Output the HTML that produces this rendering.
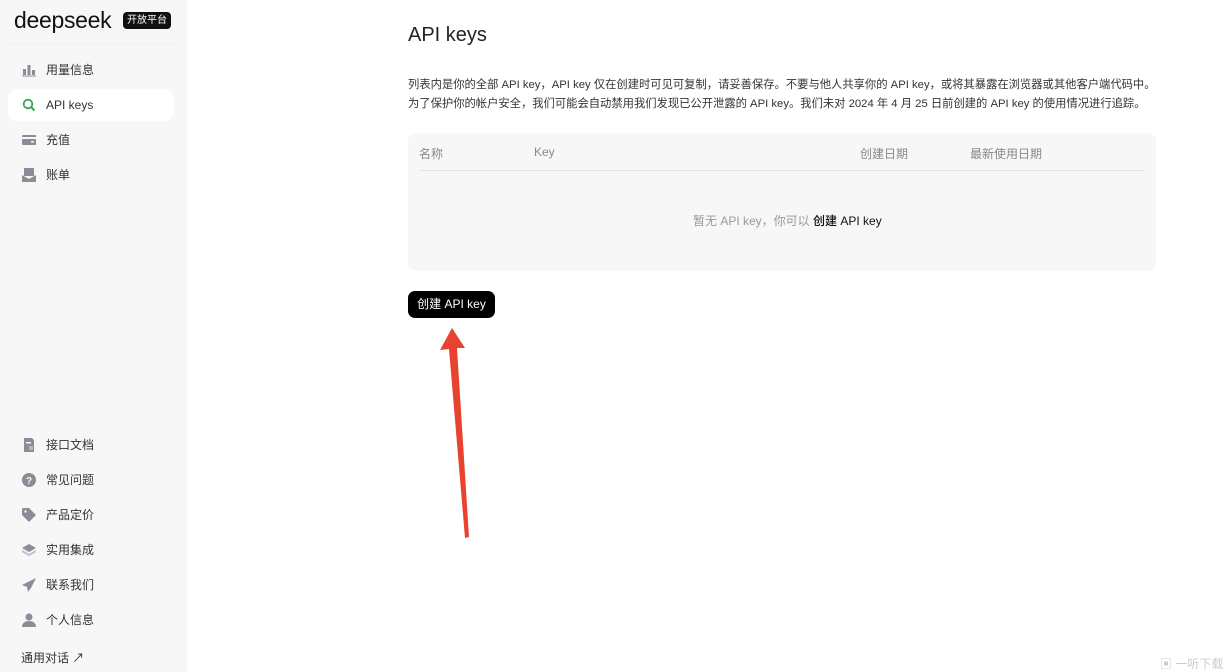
<!DOCTYPE html>
<html><head><meta charset="utf-8"><style>
*{margin:0;padding:0;box-sizing:border-box}
body{width:1224px;height:672px;overflow:hidden;background:#fff;font-family:"Liberation Sans","Noto Sans CJK SC",sans-serif;position:relative;color:#222}
.side{position:absolute;left:0;top:0;width:187px;height:672px;background:#f7f7f8}
.logo{position:absolute;left:14px;top:7px;font-size:23px;font-weight:500;letter-spacing:-0.3px;color:#111}
.badge{position:absolute;left:123px;top:12px;background:#111;color:#fff;font-size:10px;padding:1px 4px;border-radius:4px;line-height:15px}
.sep{position:absolute;left:8px;top:43px;width:166px;height:1px;background:#f0f0f0}
.item{position:absolute;left:8px;width:166px;height:32px;border-radius:10px;font-size:12px;color:#333;line-height:32px;padding-left:38px}
.item.act{background:#fff}
.ic{position:absolute;left:14px;top:9px;width:14px;height:14px}
h1{position:absolute;left:408px;top:24px;font-size:20px;font-weight:500;color:#222}
.desc{position:absolute;left:408px;top:76px;font-size:11.3px;line-height:19px;color:#333;white-space:nowrap}
.tbl{position:absolute;left:408px;top:133px;width:748px;height:138px;background:#f7f7f8;border-radius:8px}
.th{position:absolute;top:12px;font-size:12px;color:#888}
.line{position:absolute;left:11px;top:37px;width:725px;height:1px;background:#e3e3e3}
.empty{position:absolute;left:285px;top:79px;font-size:12px;color:#999}
.empty b{color:#111;font-weight:500}
.btn{position:absolute;left:408px;top:291px;width:87px;height:27px;background:#000;color:#fff;border-radius:7px;font-size:12px;line-height:27px;text-align:center}
</style></head><body>
<div class="side">
<div class="logo">deepseek</div><div class="badge">开放平台</div>
<div class="sep"></div>
<div class="item" style="top:54px"><svg class="ic" viewBox="0 0 14 14"><rect x="1" y="6" width="3" height="6" fill="#8a8d96"/><rect x="5.5" y="2" width="3" height="10" fill="#8a8d96"/><rect x="10" y="7" width="3" height="5" fill="#8a8d96"/><rect x="0" y="12.5" width="14" height="1" fill="#8a8d96"/></svg>用量信息</div>
<div class="item act" style="top:89px"><svg class="ic" viewBox="0 0 14 14"><circle cx="6" cy="6" r="4.3" fill="none" stroke="#3aa654" stroke-width="1.8"/><path d="M9 9l3.5 3.5" stroke="#3aa654" stroke-width="2"/></svg>API keys</div>
<div class="item" style="top:124px"><svg class="ic" viewBox="0 0 14 14"><rect x="0" y="2" width="14" height="10" rx="1" fill="#8a8d96"/><rect x="0" y="4" width="14" height="2" fill="#f7f7f8"/><rect x="9" y="8" width="3" height="1.5" fill="#f7f7f8"/></svg>充值</div>
<div class="item" style="top:159px"><svg class="ic" viewBox="0 0 14 14"><rect x="2" y="0" width="10" height="8" fill="#8a8d96"/><path d="M0 7l7 4 7-4v7H0z" fill="#8a8d96"/></svg>账单</div>
<div class="item" style="top:429px"><svg class="ic" viewBox="0 0 14 14"><path d="M2 0h8l2 2v12H2z" fill="#8a8d96"/><rect x="4" y="4" width="5" height="1.5" fill="#f7f7f8"/><rect x="7" y="8" width="4" height="4" fill="#b5b7bd"/></svg>接口文档</div>
<div class="item" style="top:464px"><svg class="ic" viewBox="0 0 14 14"><circle cx="7" cy="7" r="7" fill="#8a8d96"/><text x="7" y="11" font-size="10" font-weight="bold" fill="#f7f7f8" text-anchor="middle" font-family="Liberation Sans">?</text></svg>常见问题</div>
<div class="item" style="top:499px"><svg class="ic" viewBox="0 0 14 14"><path d="M0 1v6l7 7 7-7-7-7H1z" fill="#8a8d96"/><circle cx="3.5" cy="3.5" r="1.2" fill="#f7f7f8"/></svg>产品定价</div>
<div class="item" style="top:534px"><svg class="ic" viewBox="0 0 14 14"><path d="M7 1l7 4-7 4-7-4z" fill="#8a8d96"/><path d="M0 8l7 4 7-4" stroke="#c0c2c7" stroke-width="2" fill="none"/></svg>实用集成</div>
<div class="item" style="top:569px"><svg class="ic" viewBox="0 0 14 14"><path d="M14 0L0 7l5 2 1 5 3-4z" fill="#8a8d96"/></svg>联系我们</div>
<div class="item" style="top:604px"><svg class="ic" viewBox="0 0 14 14"><circle cx="7" cy="4" r="3.5" fill="#8a8d96"/><path d="M0 14c0-4 3-6 7-6s7 2 7 6z" fill="#8a8d96"/></svg>个人信息</div>
<div style="position:absolute;left:21px;top:649px;font-size:12px;color:#333">通用对话 ↗</div>
</div>
<h1>API keys</h1>
<div class="desc">列表内是你的全部 API key，API key 仅在创建时可见可复制，请妥善保存。不要与他人共享你的 API key，或将其暴露在浏览器或其他客户端代码中。<br>为了保护你的帐户安全，我们可能会自动禁用我们发现已公开泄露的 API key。我们未对 2024 年 4 月 25 日前创建的 API key 的使用情况进行追踪。</div>
<div class="tbl">
<div class="th" style="left:11px">名称</div><div class="th" style="left:126px">Key</div><div class="th" style="left:452px">创建日期</div><div class="th" style="left:562px">最新使用日期</div>
<div class="line"></div>
<div class="empty">暂无 API key，你可以 <b>创建 API key</b></div>
</div>
<div class="btn">创建 API key</div>
<svg style="position:absolute;left:0;top:0" width="1224" height="672"><path d="M452 328L440 350L449 349L465 538L469 537L457 348L465 348Z" fill="#e8432f"/></svg>
<div style="position:absolute;left:1160px;top:655px;font-size:12px;color:#ccc">▣ 一听下载</div>
</body></html>
